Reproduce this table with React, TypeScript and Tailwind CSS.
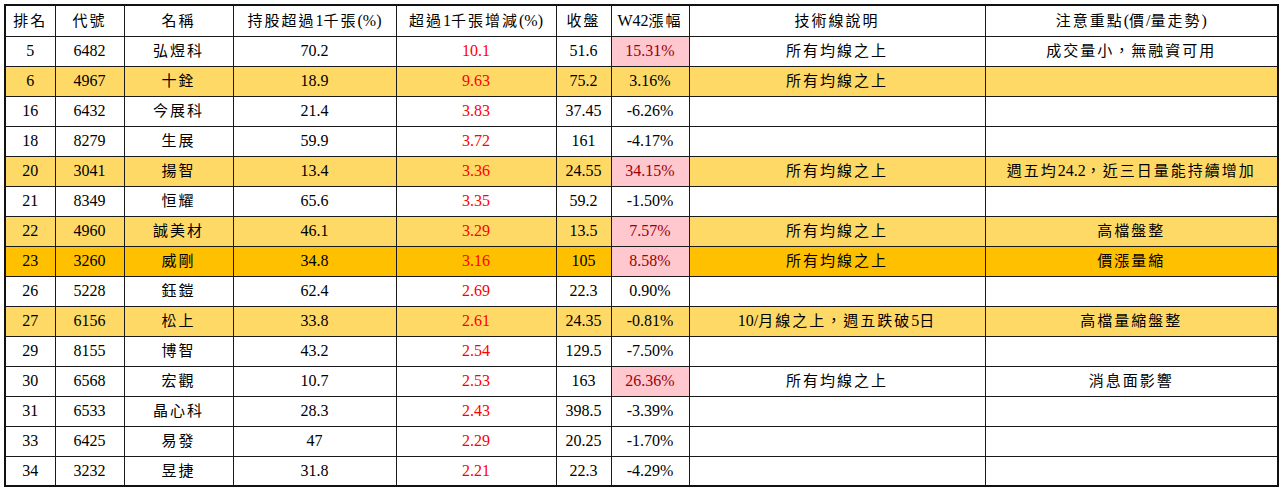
import React from 'react'

type Row = {
  rank: string
  code: string
  name: string
  hold: string
  delta: string
  close: string
  w42: string
  hot?: boolean
  tech?: string
  note?: string
  tone?: 'yellow' | 'orange'
}

const rows: Row[] = [
  { rank: '5', code: '6482', name: '弘煜科', hold: '70.2', delta: '10.1', close: '51.6', w42: '15.31%', hot: true, tech: '所有均線之上', note: '成交量小，無融資可用' },
  { rank: '6', code: '4967', name: '十銓', hold: '18.9', delta: '9.63', close: '75.2', w42: '3.16%', tech: '所有均線之上', tone: 'yellow' },
  { rank: '16', code: '6432', name: '今展科', hold: '21.4', delta: '3.83', close: '37.45', w42: '-6.26%' },
  { rank: '18', code: '8279', name: '生展', hold: '59.9', delta: '3.72', close: '161', w42: '-4.17%' },
  { rank: '20', code: '3041', name: '揚智', hold: '13.4', delta: '3.36', close: '24.55', w42: '34.15%', hot: true, tech: '所有均線之上', note: '週五均24.2，近三日量能持續增加', tone: 'yellow' },
  { rank: '21', code: '8349', name: '恒耀', hold: '65.6', delta: '3.35', close: '59.2', w42: '-1.50%' },
  { rank: '22', code: '4960', name: '誠美材', hold: '46.1', delta: '3.29', close: '13.5', w42: '7.57%', hot: true, tech: '所有均線之上', note: '高檔盤整', tone: 'yellow' },
  { rank: '23', code: '3260', name: '威剛', hold: '34.8', delta: '3.16', close: '105', w42: '8.58%', hot: true, tech: '所有均線之上', note: '價漲量縮', tone: 'orange' },
  { rank: '26', code: '5228', name: '鈺鎧', hold: '62.4', delta: '2.69', close: '22.3', w42: '0.90%' },
  { rank: '27', code: '6156', name: '松上', hold: '33.8', delta: '2.61', close: '24.35', w42: '-0.81%', tech: '10/月線之上，週五跌破5日', note: '高檔量縮盤整', tone: 'yellow' },
  { rank: '29', code: '8155', name: '博智', hold: '43.2', delta: '2.54', close: '129.5', w42: '-7.50%' },
  { rank: '30', code: '6568', name: '宏觀', hold: '10.7', delta: '2.53', close: '163', w42: '26.36%', hot: true, tech: '所有均線之上', note: '消息面影響' },
  { rank: '31', code: '6533', name: '晶心科', hold: '28.3', delta: '2.43', close: '398.5', w42: '-3.39%' },
  { rank: '33', code: '6425', name: '易發', hold: '47', delta: '2.29', close: '20.25', w42: '-1.70%' },
  { rank: '34', code: '3232', name: '昱捷', hold: '31.8', delta: '2.21', close: '22.3', w42: '-4.29%' },
]

const headers = ['排名', '代號', '名稱', '持股超過1千張(%)', '超過1千張增減(%)', '收盤', 'W42漲幅', '技術線說明', '注意重點(價/量走勢)']
const widths = ['w-[50px]', 'w-[69px]', 'w-[109px]', 'w-[163px]', 'w-[160px]', 'w-[55px]', 'w-[78px]', 'w-[296px]', 'w-[293px]']

const cell = 'border border-[#1a1a1a] p-0 text-center align-middle whitespace-nowrap'

// spread only the CJK runs, keep latin digits tight like the sheet does
function Mixed({ text }: { text: string }) {
  const parts = text.match(/[\u3000-\u9fff\uff00-\uffef]+|[^\u3000-\u9fff\uff00-\uffef]+/g) ?? []
  return (
    <>
      {parts.map((p, i) =>
        /[\u3000-\u9fff\uff00-\uffef]/.test(p) ? (
          <span key={i} className="tracking-[2px] text-[15px]">{p}</span>
        ) : (
          <span key={i} className="text-[16px]">{p}</span>
        ),
      )}
    </>
  )
}

export default function App() {
  return (
    <div className="bg-white w-[1280px] h-[489px] pt-[4px] pl-[4px] overflow-hidden font-['Liberation_Serif','Noto_Sans_CJK_TC',serif] text-[16px] text-black">
      <table className="table-fixed border-collapse border-2 border-[#111] w-[1273px]">
        <colgroup>
          {widths.map((w, i) => (
            <col key={i} className={w} />
          ))}
        </colgroup>
        <thead>
          <tr className="h-[31px] bg-white">
            {headers.map((h, i) => (
              <th key={i} className={`${cell} font-normal`}>
                <Mixed text={h} />
              </th>
            ))}
          </tr>
        </thead>
        <tbody>
          {rows.map((r) => {
            const bg = r.tone === 'yellow' ? 'bg-[#ffd966]' : r.tone === 'orange' ? 'bg-[#ffc000]' : 'bg-white'
            return (
              <tr key={r.rank} className={`h-[30px] ${bg}`}>
                <td className={cell}>{r.rank}</td>
                <td className={cell}>{r.code}</td>
                <td className={cell}><Mixed text={r.name} /></td>
                <td className={cell}>{r.hold}</td>
                <td className={`${cell} text-[#ff0000]`}>{r.delta}</td>
                <td className={cell}>{r.close}</td>
                <td className={`${cell} ${r.hot ? 'bg-[#ffc7ce] text-[#9c0006]' : ''}`}>{r.w42}</td>
                <td className={cell}><Mixed text={r.tech ?? ''} /></td>
                <td className={cell}><Mixed text={r.note ?? ''} /></td>
              </tr>
            )
          })}
        </tbody>
      </table>
    </div>
  )
}
